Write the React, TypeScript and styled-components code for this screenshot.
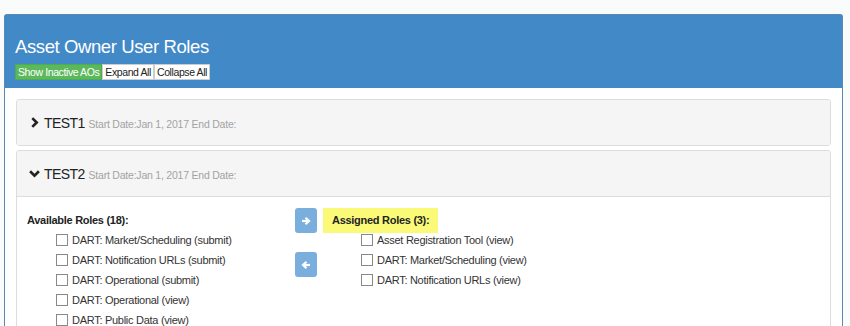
import styled, { createGlobalStyle } from 'styled-components'

const GlobalStyle = createGlobalStyle`
  html, body {
    margin: 0;
    padding: 0;
    background: #fafbfb;
    font-family: 'Liberation Sans', Arial, sans-serif;
    color: #333;
  }
`

const Page = styled.div`
  padding: 14px 7px 0 4px;
`

const Panel = styled.div`
  border: 1px solid #5b88b3;
  border-bottom: none;
  border-radius: 3px 3px 0 0;
  background: #fff;
`

const PanelHeader = styled.div`
  background: #4189c7;
  padding: 21px 10px 8px 10px;
`

const Title = styled.h3`
  margin: 0 0 6px 0;
  color: #fff;
  font-size: 18.5px;
  letter-spacing: -0.4px;
  font-weight: normal;
  line-height: 22px;
`

const ButtonGroup = styled.div`
  display: flex;
`

const ToolButton = styled.button<{ $active?: boolean }>`
  font-family: inherit;
  font-size: 10.5px;
  letter-spacing: -0.4px;
  line-height: 14px;
  height: 16px;
  padding: 0 2px;
  border: 1px solid ${(p) => (p.$active ? '#4cae4c' : '#ccc')};
  background: ${(p) => (p.$active ? '#5cb85c' : '#fff')};
  color: ${(p) => (p.$active ? '#fff' : '#222')};
  cursor: pointer;
`

const PanelBody = styled.div`
  padding: 11px 11px 0 11px;
  display: flex;
  flex-direction: column;
  gap: 4px;
`

const Group = styled.div`
  border: 1px solid #ddd;
  border-radius: 3px;
  background: #fff;
`

const GroupHeader = styled.div<{ $open?: boolean }>`
  background: #f5f5f5;
  height: 45px;
  padding: 0 12px;
  display: flex;
  align-items: center;
  gap: 4px;
  border-bottom: ${(p) => (p.$open ? '1px solid #ddd' : 'none')};
  border-radius: 3px 3px 0 0;
`

const GroupName = styled.span`
  font-size: 14px;
  letter-spacing: -0.6px;
  color: #222;
`

const Dates = styled.span`
  font-size: 10.5px;
  letter-spacing: -0.22px;
  color: #a3a3a3;
  margin-top: 3px;
`

const GroupBody = styled.div`
  display: grid;
  grid-template-columns: 268px 28px 1fr;
  padding: 14px 10px 0 10px;
  height: 140px;
`

const Column = styled.div`
  display: flex;
  flex-direction: column;
`

const Heading = styled.div<{ $highlight?: boolean }>`
  font-size: 11px;
  letter-spacing: -0.28px;
  font-weight: bold;
  color: #222;
  line-height: 25px;
  align-self: flex-start;
  padding: 0 ${(p) => (p.$highlight ? '9px' : '0')};
  background: ${(p) => (p.$highlight ? '#fafa78' : 'transparent')};
  margin-top: -3px;
`

const RoleList = styled.div<{ $indent: number }>`
  display: flex;
  flex-direction: column;
  padding-left: ${(p) => p.$indent}px;
  margin-top: -3px;
`

const Role = styled.label`
  display: flex;
  align-items: center;
  gap: 4px;
  height: 20px;
  font-size: 11px;
  letter-spacing: -0.28px;
  color: #333;
`

const Box = styled.span`
  width: 10px;
  height: 10px;
  border: 1px solid #888;
  background: #fff;
`

const Arrows = styled.div`
  display: flex;
  flex-direction: column;
  gap: 19px;
  margin-top: -3px;
`

const ArrowButton = styled.button`
  width: 22px;
  height: 25px;
  border: none;
  border-radius: 3px;
  background: #7aaedc;
  padding: 0;
  display: flex;
  align-items: center;
  justify-content: center;
`

const Chevron = ({ open }: { open?: boolean }) => (
  <svg width="11" height="11" viewBox="0 0 10 10">
    {open ? (
      <path d="M1 3 L5 7 L9 3" fill="none" stroke="#222" strokeWidth="2.4" />
    ) : (
      <path d="M3 1 L7 5 L3 9" fill="none" stroke="#222" strokeWidth="2.4" />
    )}
  </svg>
)

const Arrow = ({ left }: { left?: boolean }) => (
  <svg width="10" height="10" viewBox="0 0 10 10">
    <g transform={left ? 'rotate(180 5 5)' : undefined}>
      <path d="M1 5 H7" stroke="#fff" strokeWidth="2.2" />
      <path d="M4.5 1.8 L8 5 L4.5 8.2" fill="none" stroke="#fff" strokeWidth="2.2" />
    </g>
  </svg>
)

const available = [
  'DART: Market/Scheduling (submit)',
  'DART: Notification URLs (submit)',
  'DART: Operational (submit)',
  'DART: Operational (view)',
  'DART: Public Data (view)',
]

const assigned = [
  'Asset Registration Tool (view)',
  'DART: Market/Scheduling (view)',
  'DART: Notification URLs (view)',
]

export default function App() {
  return (
    <>
      <GlobalStyle />
      <Page>
        <Panel>
          <PanelHeader>
            <Title>Asset Owner User Roles</Title>
            <ButtonGroup>
              <ToolButton $active>Show Inactive AOs</ToolButton>
              <ToolButton>Expand All</ToolButton>
              <ToolButton>Collapse All</ToolButton>
            </ButtonGroup>
          </PanelHeader>
          <PanelBody>
            <Group>
              <GroupHeader>
                <Chevron />
                <GroupName>TEST1</GroupName>
                <Dates>Start Date:Jan 1, 2017 End Date:</Dates>
              </GroupHeader>
            </Group>
            <Group>
              <GroupHeader $open>
                <Chevron open />
                <GroupName>TEST2</GroupName>
                <Dates>Start Date:Jan 1, 2017 End Date:</Dates>
              </GroupHeader>
              <GroupBody>
                <Column>
                  <Heading>Available Roles (18):</Heading>
                  <RoleList $indent={29}>
                    {available.map((r) => (
                      <Role key={r}>
                        <Box />
                        {r}
                      </Role>
                    ))}
                  </RoleList>
                </Column>
                <Arrows>
                  <ArrowButton>
                    <Arrow />
                  </ArrowButton>
                  <ArrowButton>
                    <Arrow left />
                  </ArrowButton>
                </Arrows>
                <Column>
                  <Heading $highlight>Assigned Roles (3):</Heading>
                  <RoleList $indent={38}>
                    {assigned.map((r) => (
                      <Role key={r}>
                        <Box />
                        {r}
                      </Role>
                    ))}
                  </RoleList>
                </Column>
              </GroupBody>
            </Group>
          </PanelBody>
        </Panel>
      </Page>
    </>
  )
}
